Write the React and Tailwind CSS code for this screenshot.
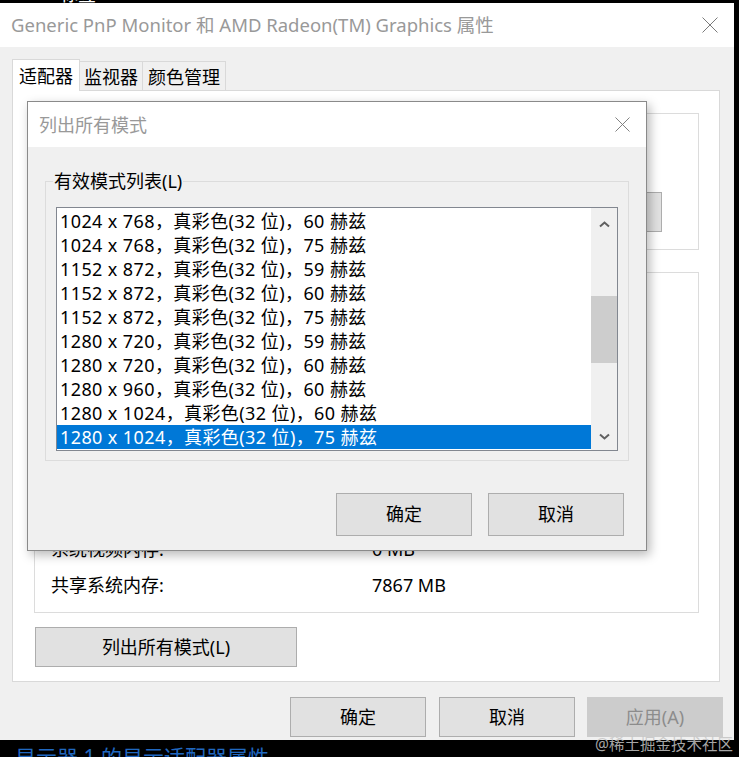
import React from 'react';

const modes = [
  '1024 x 768，真彩色(32 位)，60 赫兹',
  '1024 x 768，真彩色(32 位)，75 赫兹',
  '1152 x 872，真彩色(32 位)，59 赫兹',
  '1152 x 872，真彩色(32 位)，60 赫兹',
  '1152 x 872，真彩色(32 位)，75 赫兹',
  '1280 x 720，真彩色(32 位)，59 赫兹',
  '1280 x 720，真彩色(32 位)，60 赫兹',
  '1280 x 960，真彩色(32 位)，60 赫兹',
  '1280 x 1024，真彩色(32 位)，60 赫兹',
  '1280 x 1024，真彩色(32 位)，75 赫兹',
];

const adapterInfo = [
  ['芯片类型:', 'AMD Radeon Graphics Processor (0x15D8)'],
  ['DAC 类型:', 'Internal DAC(400MHz)'],
  ['适配器字符串:', 'AMD Radeon(TM) Graphics'],
  ['BIOS 信息:', 'AMD Radeon(TM) Graphics'],
  ['总可用图形内存:', '8379 MB'],
  ['专用视频内存:', '512 MB'],
  ['系统视频内存:', '0 MB'],
  ['共享系统内存:', '7867 MB'],
];

const CloseIcon = ({ size = 16 }) => (
  <svg width={size} height={size} viewBox="0 0 16 16" fill="none">
    <path d="M0.5 0.5 L15.5 15.5 M15.5 0.5 L0.5 15.5" stroke="#7a7a7a" strokeWidth="1" />
  </svg>
);

const Chevron = ({ down }) => (
  <svg width="11" height="7" viewBox="0 0 11 7" fill="none">
    <polyline
      points={down ? '1,1.5 5.5,5.5 10,1.5' : '1,5.5 5.5,1.5 10,5.5'}
      stroke="#606060"
      strokeWidth="2"
    />
  </svg>
);

const WinButton = ({ children, className = '' }) => (
  <button
    className={`flex items-center justify-center bg-[#e1e1e1] border border-[#adadad] text-[18px] text-black ${className}`}
  >
    {children}
  </button>
);

const App = () => {
  return (
    <div className="relative w-[739px] h-[757px] overflow-hidden bg-black font-['Noto_Sans','Noto_Sans_CJK_SC',sans-serif] text-black">
      {/* sliver of the window behind */}
      <div className="h-[3px] overflow-hidden flex items-end pl-[60px]">
        <span className="text-white text-[18px] leading-[18px]">标签</span>
      </div>

      {/* main properties window */}
      <div className="w-[734px] flex flex-col">
        <div className="h-[44px] bg-white flex items-center justify-between pl-[11px] pr-[16px]">
          <span className="text-[18.5px] leading-[24px] text-[#999999]">
            Generic PnP Monitor 和 AMD Radeon(TM) Graphics 属性
          </span>
          <CloseIcon />
        </div>

        <div className="h-[693px] bg-[#f0f0f0] pl-[12px] pr-[11px] pt-[12px] flex flex-col">
          {/* tabs */}
          <div className="flex items-end h-[32px]">
            <div className="relative z-10 h-[32px] bg-white border border-b-0 border-[#d9d9d9] px-[6px] text-[18px] leading-[32px]">
              适配器
            </div>
            <div className="h-[30px] border border-l-0 border-b-0 border-[#d9d9d9] px-[4px] text-[18px] leading-[30px]">
              监视器
            </div>
            <div className="h-[30px] border border-l-0 border-b-0 border-[#d9d9d9] px-[5px] text-[18px] leading-[30px]">
              颜色管理
            </div>
          </div>

          {/* tab panel */}
          <div className="-mt-[1px] w-[708px] h-[592px] bg-white border border-[#d9d9d9] flex flex-col pl-[21px] pr-[20px] pt-[22px]">
            <div className="h-[137px] border border-[#dcdcdc] flex justify-end items-start pt-[78px] pr-[36px]">
              <WinButton className="w-[135px] h-[40px]">属性(P)</WinButton>
            </div>

            <div className="mt-[22px] h-[341px] border border-[#dcdcdc] flex flex-col justify-end pb-[9px] overflow-hidden">
              {adapterInfo.map(([label, value]) => (
                <div key={label} className="flex h-[36px] text-[18px] leading-[36px]">
                  <span className="w-[337px] pl-[16px]">{label}</span>
                  <span>{value}</span>
                </div>
              ))}
            </div>

            <WinButton className="mt-[14px] ml-[1px] w-[262px] h-[40px]">列出所有模式(L)</WinButton>
          </div>

          {/* dialog buttons */}
          <div className="mt-[15px] flex justify-end">
            <WinButton className="w-[136px] h-[40px]">确定</WinButton>
            <WinButton className="ml-[13px] w-[136px] h-[40px]">取消</WinButton>
            <button className="ml-[12px] w-[136px] h-[40px] bg-[#cccccc] border border-[#cccccc] text-[18px] text-[#8c8c8c] flex items-center justify-center">
              应用(A)
            </button>
          </div>
        </div>
      </div>

      {/* window title peeking out below */}
      <div className="h-[17px] overflow-hidden pl-[15px] pt-[5px]">
        <span className="text-[21px] leading-[24px] text-[#2068c0]">显示器 1 的显示适配器属性</span>
      </div>

      {/* list all modes dialog */}
      <div className="absolute left-[27px] top-[101px] w-[620px] h-[450px] flex flex-col border border-[#8a8a8a] bg-[#f0f0f0] shadow-[3px_4px_10px_rgba(0,0,0,0.28)]">
        <div className="h-[45px] bg-white flex items-center justify-between pl-[11px] pr-[16px]">
          <span className="text-[18px] leading-[24px] text-[#999999]">列出所有模式</span>
          <CloseIcon size={15} />
        </div>

        <div className="flex flex-col pl-[17px] pr-[17px] pt-[22px]">
          <fieldset className="w-[584px] border border-[#dcdcdc] px-0 pt-[14px] pb-[9px]">
            <legend className="ml-[7px] px-[1px] text-[18px] leading-[24px]">有效模式列表(L)</legend>
            <div className="mx-[10px] h-[244px] border border-[#828790] bg-white flex">
              <div className="flex-1 flex flex-col pt-[1px]">
                {modes.map((m, i) => {
                  const selected = i === modes.length - 1;
                  return (
                    <div
                      key={i}
                      className={`h-[24px] pl-[3px] text-[18px] leading-[24px] tracking-[0.4px] whitespace-nowrap ${
                        selected ? 'bg-[#0078d7] text-white' : ''
                      }`}
                    >
                      {m}
                    </div>
                  );
                })}
              </div>
              <div className="w-[26px] bg-[#f0f0f0] flex flex-col">
                <div className="h-[33px] flex items-center justify-center">
                  <Chevron />
                </div>
                <div className="flex-1 pt-[55px]">
                  <div className="h-[67px] bg-[#cdcdcd]" />
                </div>
                <div className="h-[28px] flex items-center justify-center">
                  <Chevron down />
                </div>
              </div>
            </div>
          </fieldset>

          <div className="mt-[32px] w-[584px] flex justify-end pr-[5px]">
            <WinButton className="w-[136px] h-[43px]">确定</WinButton>
            <WinButton className="ml-[16px] w-[136px] h-[43px]">取消</WinButton>
          </div>
        </div>
      </div>

      {/* watermark */}
      <div className="absolute left-[595px] top-[736px] text-[15.5px] leading-[16px] text-[#c4c4c4]/85 whitespace-nowrap">
        @稀土掘金技术社区
      </div>
    </div>
  );
};

export default App;
